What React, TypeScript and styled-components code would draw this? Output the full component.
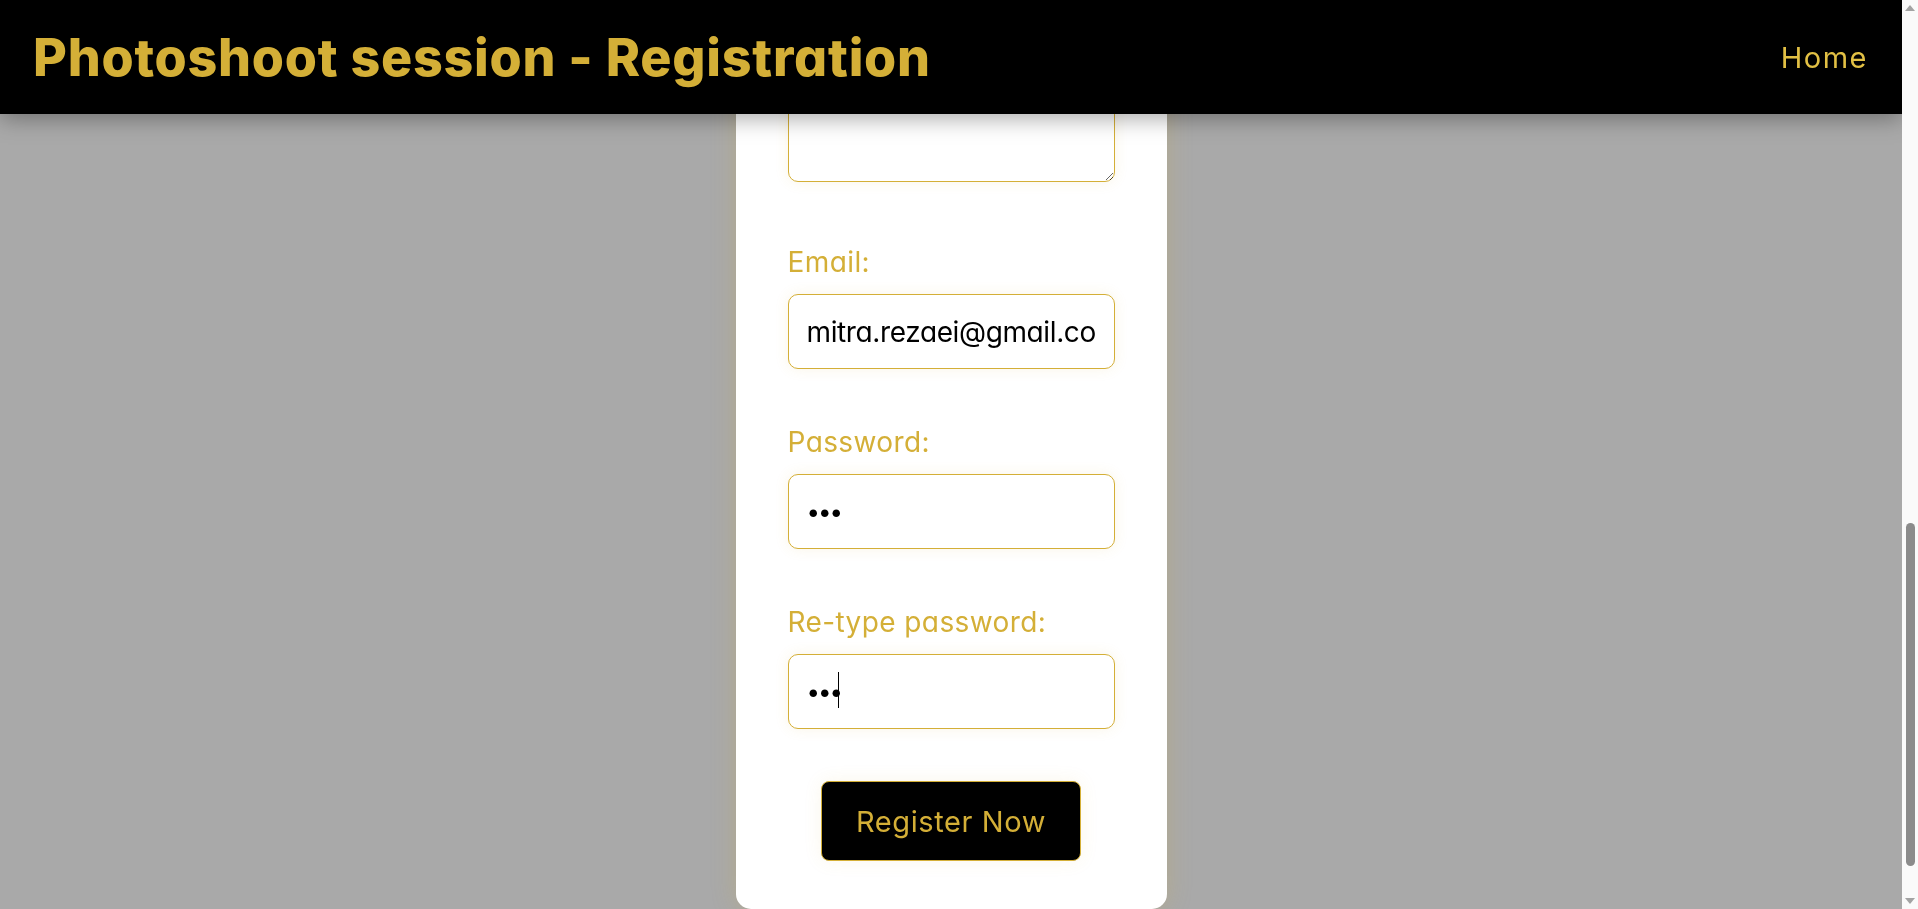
import React, { useLayoutEffect, useRef, useState } from 'react';
import styled, { createGlobalStyle } from 'styled-components';

const gold = '#d4af37';

const GlobalStyle = createGlobalStyle`
  html, body {
    margin: 0;
    padding: 0;
  }
  body {
    background: #a9a9a9;
    font-family: Inter, "Noto Sans", sans-serif;
    font-feature-settings: "cv11" 1;
  }
`;

const Shell = styled.div`
  position: fixed;
  inset: 0;
  display: flex;
`;

const Viewport = styled.div`
  flex: 1;
  overflow-y: auto;
  scrollbar-width: none;
  &::-webkit-scrollbar {
    display: none;
  }
`;

const Header = styled.header`
  position: sticky;
  top: 0;
  height: 114px;
  box-sizing: border-box;
  padding: 0 34px 0 33px;
  display: flex;
  align-items: center;
  justify-content: space-between;
  background: #000;
  box-shadow: 0 4px 22px rgba(0, 0, 0, 0.35);
  z-index: 10;
`;

const Title = styled.h1`
  margin: 0;
  font-size: 52px;
  font-weight: 800;
  color: ${gold};
  letter-spacing: 0.75px;
`;

const NavLink = styled.a`
  font-size: 29px;
  letter-spacing: 1.5px;
  color: #e2c044;
  text-decoration: none;
`;

const Main = styled.main`
  display: flex;
  justify-content: center;
  padding: 66px 0 72px;
`;

const Card = styled.form`
  width: 431px;
  box-sizing: border-box;
  padding: 52px 52px 48px;
  background: #fff;
  border-radius: 15px;
  box-shadow: 0 0 24px rgba(212, 175, 55, 0.25);
`;

const Field = styled.div<{ $gap?: number }>`
  position: relative;
  margin-bottom: ${(p) => p.$gap ?? 52}px;
`;

const Label = styled.label`
  display: block;
  font-size: 28px;
  line-height: 42px;
  letter-spacing: 0.4px;
  margin-bottom: 11px;
  color: ${gold};
`;

const Input = styled.input`
  display: block;
  width: 100%;
  height: 75px;
  box-sizing: border-box;
  padding: 0 18px;
  border: 1px solid ${gold};
  border-radius: 10px;
  background: #fff;
  font-family: inherit;
  font-feature-settings: "cv11" 1;
  font-size: 28px;
  letter-spacing: -0.38px;
  color: #000;
  box-shadow: 0 0 14px rgba(212, 175, 55, 0.12);
  &:focus {
    outline: none;
  }
`;

const PasswordInput = styled(Input).attrs({ type: 'password' })`
  font-size: 24px;
  letter-spacing: -2px;
`;

const Caret = styled.span`
  position: absolute;
  left: 50px;
  top: 71px;
  width: 1px;
  height: 36px;
  background: #000;
`;

const TextArea = styled.textarea`
  display: block;
  width: 100%;
  height: 160px;
  box-sizing: border-box;
  padding: 18px;
  border: 1px solid ${gold};
  border-radius: 10px;
  font-family: inherit;
  font-size: 24px;
  box-shadow: 0 0 14px rgba(212, 175, 55, 0.12);
  &:focus {
    outline: none;
  }
`;

const SubmitButton = styled.button`
  display: block;
  margin: 0 auto;
  width: 260px;
  height: 80px;
  background: #000;
  color: ${gold};
  border: 1px solid ${gold};
  border-radius: 8px;
  font-family: inherit;
  font-feature-settings: "cv11" 1;
  font-size: 29px;
  letter-spacing: 0.6px;
  cursor: pointer;
  box-shadow: 0 0 18px rgba(212, 175, 55, 0.1);
`;

const Rail = styled.div`
  width: 16px;
  flex-shrink: 0;
  display: flex;
  flex-direction: column;
  background: #fafafa;
`;

const ArrowButton = styled.div<{ $down?: boolean }>`
  height: 16px;
  display: flex;
  align-items: center;
  justify-content: center;
  &::after {
    content: '';
    border-left: 5px solid transparent;
    border-right: 5px solid transparent;
    ${(p) =>
      p.$down ? 'border-top: 6px solid #a3a3a3;' : 'border-bottom: 6px solid #a3a3a3;'}
  }
`;

const Track = styled.div`
  flex: 1;
  position: relative;
`;

const Thumb = styled.div`
  position: absolute;
  left: 4px;
  width: 9px;
  border-radius: 5px;
  background: #8b8b8b;
`;

const fields = [
  { id: 'first', label: 'First name:', value: 'Mitra' },
  { id: 'last', label: 'Last name:', value: 'Rezaei' },
  { id: 'phone', label: 'Phone:', value: '' },
  { id: 'date', label: 'Session date:', value: '' },
  { id: 'type', label: 'Session type:', value: '' },
  { id: 'location', label: 'Location:', value: '' },
];

export default function App() {
  const viewRef = useRef<HTMLDivElement>(null);
  const cardRef = useRef<HTMLFormElement>(null);
  const trackRef = useRef<HTMLDivElement>(null);
  const [thumb, setThumb] = useState({ top: 0, height: 0 });

  const updateThumb = () => {
    const view = viewRef.current;
    const track = trackRef.current;
    if (!view || !track) return;
    const h = track.clientHeight;
    setThumb({
      top: (h * view.scrollTop) / view.scrollHeight,
      height: (h * view.clientHeight) / view.scrollHeight,
    });
  };

  useLayoutEffect(() => {
    const view = viewRef.current;
    const card = cardRef.current;
    if (!view || !card) return;
    const bottom = card.offsetTop + card.offsetHeight;
    view.scrollTop = bottom - view.clientHeight;
    updateThumb();
  }, []);

  return (
    <>
      <GlobalStyle />
      <Shell>
        <Viewport ref={viewRef} onScroll={updateThumb}>
          <Header>
            <Title>Photoshoot session - Registration</Title>
            <NavLink href="#">Home</NavLink>
          </Header>
          <Main>
            <Card ref={cardRef} onSubmit={(e) => e.preventDefault()}>
              {fields.map((f) => (
                <Field key={f.id}>
                  <Label htmlFor={f.id}>{f.label}</Label>
                  <Input id={f.id} type="text" defaultValue={f.value} />
                </Field>
              ))}
              <Field $gap={59}>
                <Label htmlFor="notes">Notes:</Label>
                <TextArea id="notes" />
              </Field>
              <Field>
                <Label htmlFor="email">Email:</Label>
                <Input id="email" type="email" defaultValue="mitra.rezaei@gmail.com" />
              </Field>
              <Field>
                <Label htmlFor="password">Password:</Label>
                <PasswordInput id="password" defaultValue="abc" />
              </Field>
              <Field>
                <Label htmlFor="repassword">Re-type password:</Label>
                <PasswordInput id="repassword" defaultValue="abc" />
                <Caret />
              </Field>
              <SubmitButton type="submit">Register Now</SubmitButton>
            </Card>
          </Main>
        </Viewport>
        <Rail>
          <ArrowButton />
          <Track ref={trackRef}>
            <Thumb style={{ top: thumb.top, height: thumb.height }} />
          </Track>
          <ArrowButton $down />
        </Rail>
      </Shell>
    </>
  );
}
